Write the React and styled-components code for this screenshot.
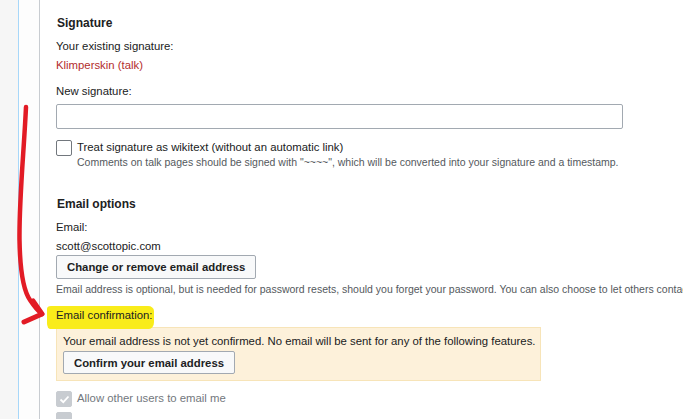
import React from "react";
import styled, { createGlobalStyle } from "styled-components";

const Global = createGlobalStyle`
  html, body { margin: 0; padding: 0; background: #fff; overflow: hidden; }
  body { font-family: "Liberation Sans", Arial, sans-serif; color: #202122; }
`;

const Page = styled.div`
  position: relative;
  display: flex;
  width: 683px;
  height: 419px;
  overflow: hidden;
`;

const Rail = styled.div`
  width: 18px;
  flex: none;
  background: #f6f6f6;
  border-right: 1px solid #a7d7f9;
`;

const Gutter = styled.div`
  width: 20px;
  flex: none;
  background: #fdfdfd;
  border-right: 1px solid #c8ccd1;
`;

const Content = styled.div`
  flex: 1;
  min-width: 0;
  padding: 15px 0 0 16px;
  font-size: 11.35px;
  line-height: 16px;
`;

const Heading = styled.h3`
  margin: ${(p) => p.$top || 0}px 0 0 1px;
  font-size: 12px;
  font-weight: bold;
  line-height: 16px;
`;

const Line = styled.div`
  margin-top: ${(p) => p.$top || 0}px;
  white-space: nowrap;
`;

const SigLink = styled.a`
  color: #b32d2d;
  text-decoration: none;
`;

const TextInput = styled.input`
  display: block;
  box-sizing: border-box;
  margin-top: 5px;
  width: 567px;
  height: 25px;
  border: 1px solid #a2a9b1;
  border-radius: 2px;
  background: #fff;
`;

const CheckRow = styled.div`
  display: flex;
  align-items: flex-start;
  gap: 5px;
  margin-top: ${(p) => p.$top || 0}px;
`;

const Box = styled.span`
  flex: none;
  box-sizing: border-box;
  width: 16px;
  height: 16px;
  margin-top: 1px;
  border-radius: 2px;
  border: 1px solid ${(p) => (p.$disabled ? "#c8ccd1" : "#72777d")};
  background: ${(p) => (p.$disabled ? "#c8ccd1" : "#fff")};
  display: flex;
  align-items: center;
  justify-content: center;
`;

const CheckText = styled.div`
  color: ${(p) => (p.$disabled ? "#72777d" : "#202122")};
`;

const Help = styled.div`
  margin-top: ${(p) => p.$top || 0}px;
  font-size: 10.5px;
  line-height: 14px;
  color: #54595d;
  white-space: nowrap;
`;

const Button = styled.button`
  display: block;
  box-sizing: border-box;
  margin-top: ${(p) => p.$top || 0}px;
  height: ${(p) => p.$h || 24}px;
  padding: 0 10px;
  border: 1px solid #a2a9b1;
  border-radius: 2px;
  background: #f8f9fa;
  color: #202122;
  font-family: "Liberation Sans", Arial, sans-serif;
  font-size: 11.35px;
  font-weight: bold;
`;

const Marker = styled.span`
  display: inline-block;
  padding: 1px 2px 6px 9px;
  margin: 0 -2px -6px -9px;
  background: #f9ec1a;
  border-radius: 4px 6px 5px 3px / 3px 5px 7px 6px;
`;

const Notice = styled.div`
  box-sizing: border-box;
  margin-top: 4px;
  width: 485px;
  height: 54px;
  padding: 5px 6px 0;
  background: #fdf1da;
  border: 1px solid #f7e4b8;
`;

const Annotation = styled.svg`
  position: absolute;
  left: 0;
  top: 0;
  pointer-events: none;
`;

const Tick = () => (
  <svg width="11" height="9" viewBox="0 0 11 9">
    <path d="M1.5 4.5 L4.3 7.2 L9.5 1.5" fill="none" stroke="#fff" strokeWidth="1.8" />
  </svg>
);

export default function App() {
  return (
    <>
      <Global />
      <Page>
        <Rail />
        <Gutter />
        <Content>
          <Heading>Signature</Heading>
          <Line $top={7}>Your existing signature:</Line>
          <Line $top={3}>
            <SigLink>Klimperskin</SigLink> <SigLink>(talk)</SigLink>
          </Line>
          <Line $top={10}>New signature:</Line>
          <TextInput type="text" />
          <CheckRow $top={10}>
            <Box />
            <div>
              <CheckText>Treat signature as wikitext (without an automatic link)</CheckText>
              <Help>
                Comments on talk pages should be signed with "~~~~", which will be converted into your signature and a timestamp.
              </Help>
            </div>
          </CheckRow>

          <Heading $top={27}>Email options</Heading>
          <Line $top={7}>Email:</Line>
          <Line $top={3}>scott@scottopic.com</Line>
          <Button $top={1}>Change or remove email address</Button>
          <Help $top={3}>
            Email address is optional, but is needed for password resets, should you forget your password. You can also choose to let others contact you by email.
          </Help>
          <Line $top={10}>
            <Marker>Email confirmation:</Marker>
          </Line>
          <Notice>
            <Line>Your email address is not yet confirmed. No email will be sent for any of the following features.</Line>
            <Button $top={2} $h={23}>Confirm your email address</Button>
          </Notice>
          <CheckRow $top={9}>
            <Box $disabled>
              <Tick />
            </Box>
            <CheckText $disabled>Allow other users to email me</CheckText>
          </CheckRow>
          <CheckRow $top={4}>
            <Box $disabled />
          </CheckRow>
        </Content>
        <Annotation width="60" height="419" viewBox="0 0 60 419">
          <path
            d="M26 107 C 24 150, 19 200, 19.5 240 C 20 270, 23 290, 30 300 C 34 306, 38 311, 42 314"
            fill="none"
            stroke="#e21b25"
            strokeWidth="4.5"
            strokeLinecap="round"
          />
          <path
            d="M33 301 L42 314 L24 322"
            fill="none"
            stroke="#e21b25"
            strokeWidth="5"
            strokeLinecap="round"
            strokeLinejoin="round"
          />
        </Annotation>
      </Page>
    </>
  );
}
